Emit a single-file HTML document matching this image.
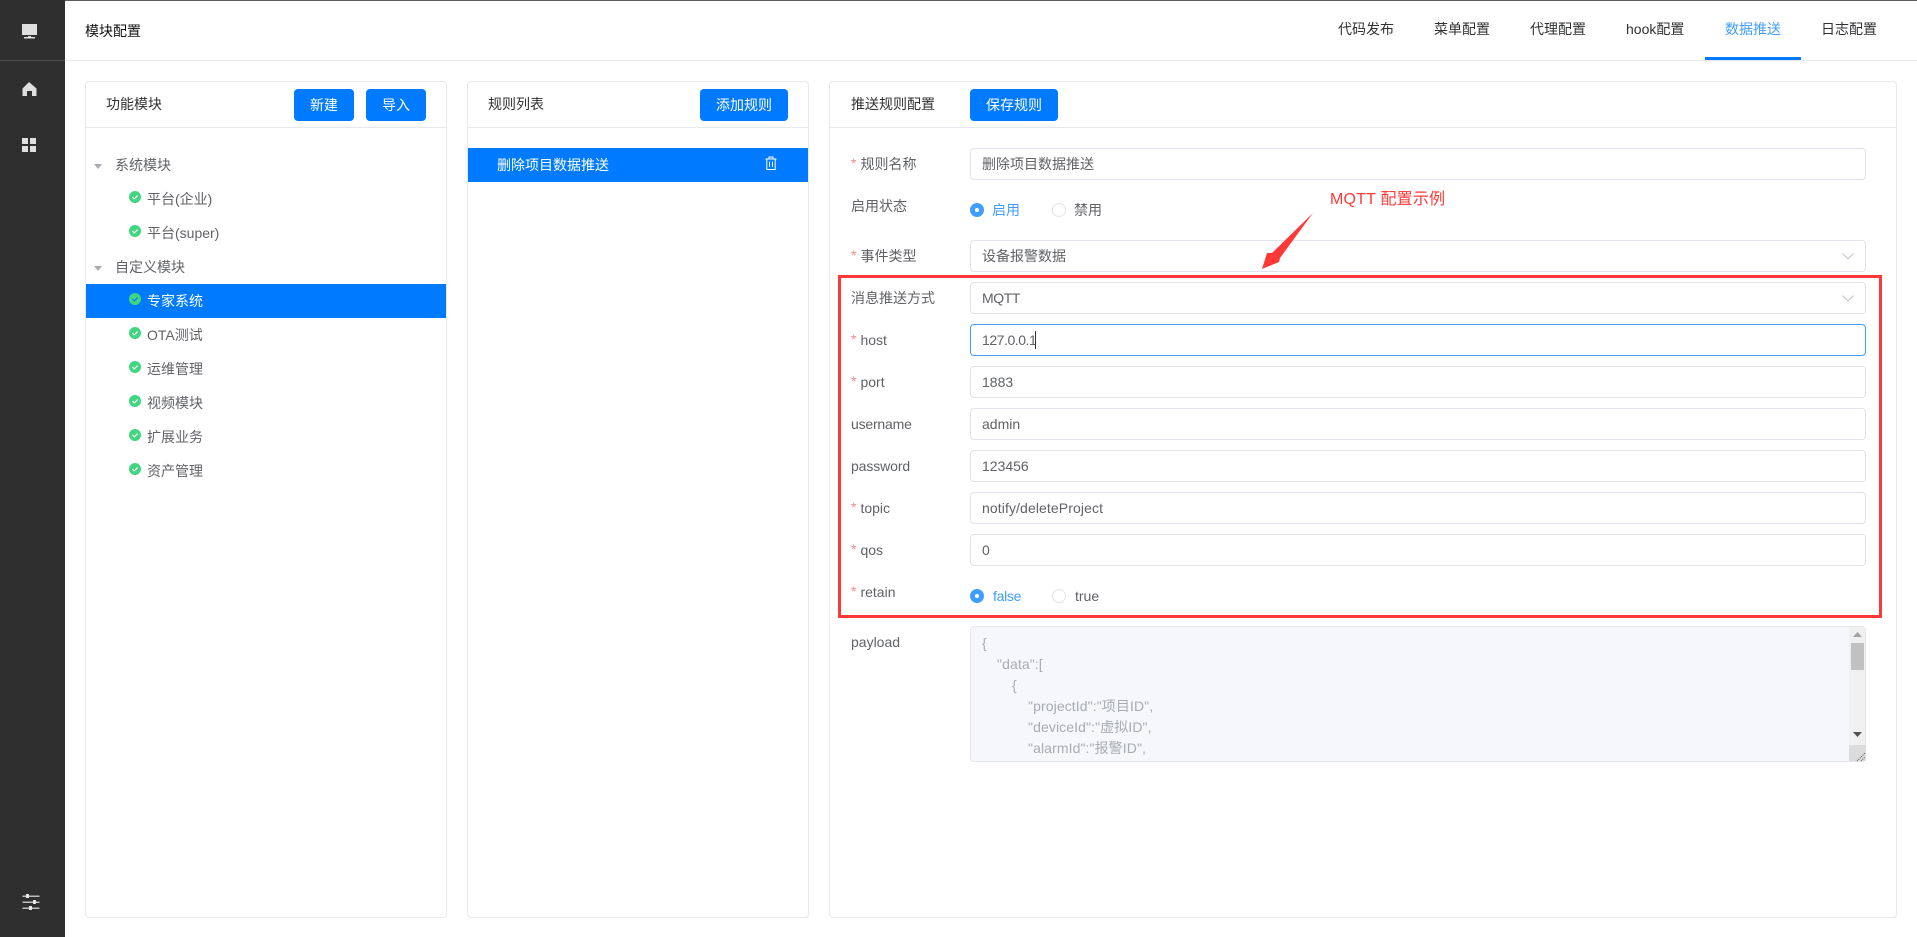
<!DOCTYPE html>
<html lang="zh-CN">
<head>
<meta charset="utf-8">
<title>模块配置</title>
<style>
*{box-sizing:border-box}
html,body{margin:0;padding:0;width:1917px;height:937px;overflow:hidden;background:#fff}
body{position:relative;font-family:"Liberation Sans","Noto Sans CJK SC",sans-serif;font-size:14px;color:#606266}
.a{position:absolute}
.t{position:absolute;line-height:20px;height:20px;white-space:nowrap}
.panel{position:absolute;top:81px;height:837px;border:1px solid #e7e9ef;border-radius:4px;background:#fff}
.line{position:absolute;height:1px;background:#e7e9ef}
.btn{position:absolute;top:89px;height:32px;line-height:32px;background:#007bff;color:#fff;text-align:center;border-radius:4px}
.inp{position:absolute;left:970px;width:896px;height:32px;border:1px solid #e1e3ea;border-radius:4px;background:#fff}
.val{left:982px}
.lb{left:851px}
.lb i{font-style:normal;color:#f78989;margin-right:4px;font-family:"Liberation Sans",sans-serif;position:relative;top:-1px}
.radio{position:absolute;width:14px;height:14px;border-radius:50%;border:1px solid #e1e3ea;background:#fff}
.radio.on{background:#409eff;border-color:#409eff}
.radio.on:after{content:"";position:absolute;left:4px;top:4px;width:4px;height:4px;border-radius:50%;background:#fff}
.blue{color:#409eff}
.hl{position:absolute;background:#007bff}
.code{position:absolute;color:#a8abb2;line-height:21px;height:21px;white-space:nowrap;letter-spacing:.1px}
</style>
</head>
<body>
<!-- top line -->
<div class="a" style="left:0;top:0;width:1917px;height:1px;background:#5e5e5e"></div>

<!-- sidebar -->
<div class="a" style="left:0;top:0;width:65px;height:937px;background:#2f2f2f"></div>
<div class="a" style="left:0;top:60px;width:65px;height:1px;background:#4a4a4a"></div>
<svg class="a" style="left:0;top:0" width="65" height="937" viewBox="0 0 65 937">
  <path fill="#dfdfdf" d="M22 24h15v11H22z"/>
  <path fill="#dfdfdf" d="M28 36h3v1h4v1.500H24V37h4z"/>
  <path fill="#dfdfdf" d="M29 82l7.500 6.500V96H32v-5h-5v5h-4.500v-7.500z"/>
  <path fill="#dfdfdf" d="M22 138h6v6h-6zM30 138h6v6h-6zM22 146h6v6h-6zM30 146h6v6h-6z"/>
  <g fill="#bdbdbd"><rect x="22.500" y="895.500" width="17" height="1.500"/><rect x="22.500" y="901.500" width="17" height="1.500"/><rect x="22.500" y="907.500" width="17" height="1.500"/></g>
  <g fill="#e6e6e6"><rect x="26" y="894" width="3" height="4"/><rect x="33" y="900" width="3" height="4"/><rect x="29" y="906" width="3" height="4"/></g>
</svg>

<!-- header -->
<div class="a" style="left:65px;top:60px;width:1852px;height:1px;background:#e7e9ef"></div>
<div class="t" style="left:85px;top:21px;color:#111">模块配置</div>
<div class="t" style="left:1338px;top:19px;color:#303133">代码发布</div>
<div class="t" style="left:1434px;top:19px;color:#303133">菜单配置</div>
<div class="t" style="left:1530px;top:19px;color:#303133">代理配置</div>
<div class="t" style="left:1626px;top:19px;color:#303133">hook配置</div>
<div class="t blue" style="left:1725px;top:19px">数据推送</div>
<div class="t" style="left:1821px;top:19px;color:#303133">日志配置</div>
<div class="a" style="left:1705px;top:57px;width:96px;height:3px;background:#007bff"></div>

<!-- panel 1 -->
<div class="panel" style="left:85px;width:362px"></div>
<div class="line" style="left:86px;top:127px;width:360px"></div>
<div class="t" style="left:106px;top:94px;color:#303133">功能模块</div>
<div class="btn" style="left:294px;width:60px">新建</div>
<div class="btn" style="left:366px;width:60px">导入</div>

<svg class="a" style="left:94px;top:164px" width="8" height="5"><path d="M0 0h8L4 5z" fill="#a8abb2"/></svg>
<div class="t" style="left:115px;top:155px">系统模块</div>
<svg class="a" style="left:129px;top:191px" width="12" height="12" viewBox="0 0 12 12"><circle cx="6" cy="6" r="6" fill="#3fd67f"/><path d="M3.400 6l1.900 1.900 3.300-3.300" fill="none" stroke="#fff" stroke-width="1.200"/></svg>
<div class="t" style="left:147px;top:189px">平台(企业)</div>
<svg class="a" style="left:129px;top:225px" width="12" height="12" viewBox="0 0 12 12"><circle cx="6" cy="6" r="6" fill="#3fd67f"/><path d="M3.400 6l1.900 1.900 3.300-3.300" fill="none" stroke="#fff" stroke-width="1.200"/></svg>
<div class="t" style="left:147px;top:223px">平台(super)</div>
<svg class="a" style="left:94px;top:266px" width="8" height="5"><path d="M0 0h8L4 5z" fill="#a8abb2"/></svg>
<div class="t" style="left:115px;top:257px">自定义模块</div>
<div class="hl" style="left:86px;top:284px;width:360px;height:34px"></div>
<svg class="a" style="left:129px;top:293px" width="12" height="12" viewBox="0 0 12 12"><circle cx="6" cy="6" r="6" fill="#3fd67f"/><path d="M3.400 6l1.900 1.900 3.300-3.300" fill="none" stroke="#007bff" stroke-width="1.200"/></svg>
<div class="t" style="left:147px;top:291px;color:#fff">专家系统</div>
<svg class="a" style="left:129px;top:327px" width="12" height="12" viewBox="0 0 12 12"><circle cx="6" cy="6" r="6" fill="#3fd67f"/><path d="M3.400 6l1.900 1.900 3.300-3.300" fill="none" stroke="#fff" stroke-width="1.200"/></svg>
<div class="t" style="left:147px;top:325px">OTA测试</div>
<svg class="a" style="left:129px;top:361px" width="12" height="12" viewBox="0 0 12 12"><circle cx="6" cy="6" r="6" fill="#3fd67f"/><path d="M3.400 6l1.900 1.900 3.300-3.300" fill="none" stroke="#fff" stroke-width="1.200"/></svg>
<div class="t" style="left:147px;top:359px">运维管理</div>
<svg class="a" style="left:129px;top:395px" width="12" height="12" viewBox="0 0 12 12"><circle cx="6" cy="6" r="6" fill="#3fd67f"/><path d="M3.400 6l1.900 1.900 3.300-3.300" fill="none" stroke="#fff" stroke-width="1.200"/></svg>
<div class="t" style="left:147px;top:393px">视频模块</div>
<svg class="a" style="left:129px;top:429px" width="12" height="12" viewBox="0 0 12 12"><circle cx="6" cy="6" r="6" fill="#3fd67f"/><path d="M3.400 6l1.900 1.900 3.300-3.300" fill="none" stroke="#fff" stroke-width="1.200"/></svg>
<div class="t" style="left:147px;top:427px">扩展业务</div>
<svg class="a" style="left:129px;top:463px" width="12" height="12" viewBox="0 0 12 12"><circle cx="6" cy="6" r="6" fill="#3fd67f"/><path d="M3.400 6l1.900 1.900 3.300-3.300" fill="none" stroke="#fff" stroke-width="1.200"/></svg>
<div class="t" style="left:147px;top:461px">资产管理</div>

<!-- panel 2 -->
<div class="panel" style="left:467px;width:342px"></div>
<div class="line" style="left:468px;top:127px;width:340px"></div>
<div class="t" style="left:488px;top:94px;color:#303133">规则列表</div>
<div class="btn" style="left:700px;width:88px">添加规则</div>
<div class="hl" style="left:468px;top:148px;width:340px;height:34px"></div>
<div class="t" style="left:497px;top:155px;color:#fff">删除项目数据推送</div>
<svg class="a" style="left:765px;top:156px" width="12" height="14" viewBox="0 0 12 14"><path d="M0.500 3h11M4 3V1h4v2M1.800 3v10.500h8.400V3M4.500 5.500v5.500M7.500 5.500v5.500" fill="none" stroke="#fff" stroke-width="1"/></svg>

<!-- panel 3 -->
<div class="panel" style="left:829px;width:1068px"></div>
<div class="line" style="left:830px;top:127px;width:1066px"></div>
<div class="t" style="left:851px;top:94px;color:#303133">推送规则配置</div>
<div class="btn" style="left:970px;width:88px">保存规则</div>

<!-- form rows -->
<div class="t lb" style="top:154px"><i>*</i>规则名称</div>
<div class="inp" style="top:148px"></div>
<div class="t val" style="top:154px">删除项目数据推送</div>

<div class="t lb" style="top:196px">启用状态</div>
<div class="radio on" style="left:970px;top:203px"></div>
<div class="t blue" style="left:992px;top:200px">启用</div>
<div class="radio" style="left:1052px;top:203px"></div>
<div class="t" style="left:1074px;top:200px">禁用</div>

<div class="t lb" style="top:246px"><i>*</i>事件类型</div>
<div class="inp" style="top:240px"></div>
<div class="t val" style="top:246px">设备报警数据</div>
<svg class="a" style="left:1842px;top:253px" width="12" height="7"><path d="M.500 .500L6 6l5.500-5.500" fill="none" stroke="#c0c4cc"/></svg>

<div class="t lb" style="top:288px">消息推送方式</div>
<div class="inp" style="top:282px"></div>
<div class="t val" style="top:288px;letter-spacing:-.4px">MQTT</div>
<svg class="a" style="left:1842px;top:295px" width="12" height="7"><path d="M.500 .500L6 6l5.500-5.500" fill="none" stroke="#c0c4cc"/></svg>

<div class="t lb" style="top:330px"><i>*</i>host</div>
<div class="inp" style="top:324px;border-color:#409eff"></div>
<div class="t val" style="top:330px;letter-spacing:-.45px">127.0.0.1</div>
<div class="a" style="left:1035px;top:331px;width:1px;height:18px;background:#333"></div>

<div class="t lb" style="top:372px"><i>*</i>port</div>
<div class="inp" style="top:366px"></div>
<div class="t val" style="top:372px">1883</div>

<div class="t lb" style="top:414px;letter-spacing:-.2px">username</div>
<div class="inp" style="top:408px"></div>
<div class="t val" style="top:414px">admin</div>

<div class="t lb" style="top:456px;letter-spacing:-.1px">password</div>
<div class="inp" style="top:450px"></div>
<div class="t val" style="top:456px">123456</div>

<div class="t lb" style="top:498px"><i>*</i>topic</div>
<div class="inp" style="top:492px"></div>
<div class="t val" style="top:498px;letter-spacing:.1px">notify/deleteProject</div>

<div class="t lb" style="top:540px"><i>*</i>qos</div>
<div class="inp" style="top:534px"></div>
<div class="t val" style="top:540px">0</div>

<div class="t lb" style="top:582px"><i>*</i>retain</div>
<div class="radio on" style="left:970px;top:589px"></div>
<div class="t blue" style="left:993px;top:586px;letter-spacing:-.3px">false</div>
<div class="radio" style="left:1052px;top:589px"></div>
<div class="t" style="left:1075px;top:586px">true</div>

<!-- payload -->
<div class="t lb" style="top:632px">payload</div>
<div class="a" style="left:970px;top:626px;width:896px;height:136px;background:#f5f7fa;border:1px solid #e4e6ee;border-radius:4px"></div>
<div class="code" style="left:982px;top:633px">{</div>
<div class="code" style="left:997px;top:654px">"data":[</div>
<div class="code" style="left:1012px;top:675px">{</div>
<div class="code" style="left:1028px;top:696px">"projectId":"项目ID",</div>
<div class="code" style="left:1028px;top:717px">"deviceId":"虚拟ID",</div>
<div class="code" style="left:1028px;top:738px">"alarmId":"报警ID",</div>
<div class="a" style="left:1849px;top:627px;width:16px;height:118px;background:#f0f0f0"></div>
<div class="a" style="left:1851px;top:643px;width:13px;height:27px;background:#c1c1c1"></div>
<svg class="a" style="left:1853px;top:632px" width="9" height="6"><path d="M4.500 0L9 5H0z" fill="#a3a3a3"/></svg>
<svg class="a" style="left:1853px;top:732px" width="9" height="6"><path d="M0 0h9L4.500 5z" fill="#505050"/></svg>
<div class="a" style="left:1849px;top:745px;width:17px;height:16px;background:#dcdcdc"></div>
<svg class="a" style="left:1856px;top:752px" width="10" height="10"><path d="M1 9l8-8M5 9l4-4" stroke="#555" stroke-width="1" stroke-dasharray="1 1" fill="none"/></svg>

<!-- annotations -->
<div class="a" style="left:838px;top:275px;width:1044px;height:343px;border:3px solid #ff3838"></div>
<div class="t" style="left:1330px;top:190px;color:#ff3838;font-size:16px;letter-spacing:.2px">MQTT 配置示例</div>
<svg class="a" style="left:0;top:0;pointer-events:none" width="1917" height="937"><polygon points="1313,213 1280,258 1279,262 1262,269 1267,253 1272,253" fill="#ff3838"/></svg>
</body>
</html>
